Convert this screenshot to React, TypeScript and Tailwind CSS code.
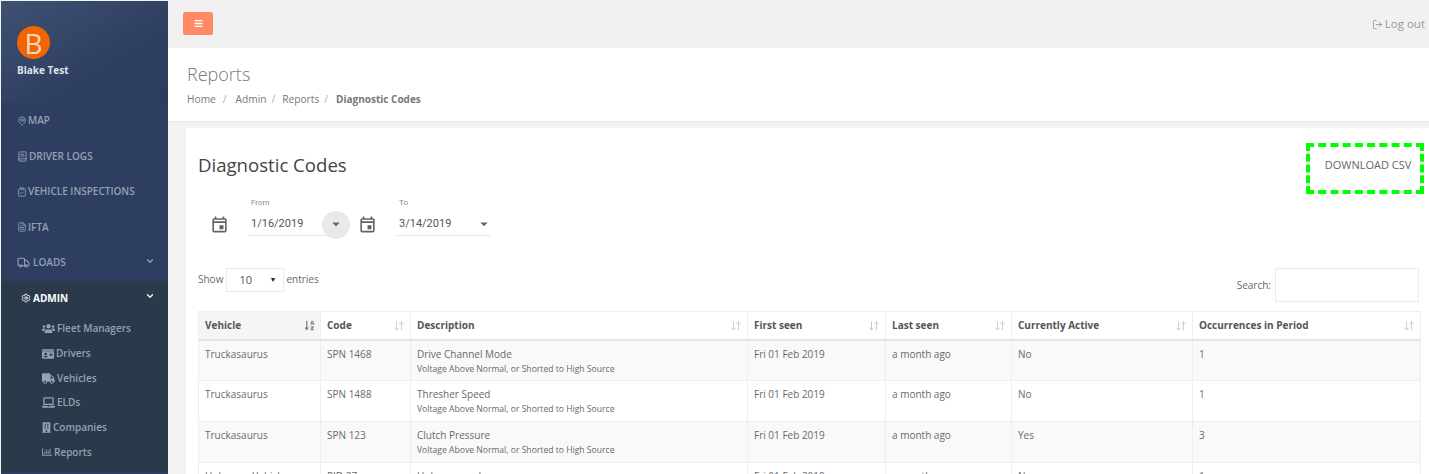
import { BookText, ChevronDown, ClipboardCheck, FileText, LogOut, MapPin, Truck, Settings } from 'lucide-react'
import { FaBars, FaBuilding, FaIdCard, FaLaptop, FaRegChartBar, FaSortAlphaDown, FaTruck, FaUsers } from 'react-icons/fa'
import { MdArrowDropDown, MdOutlineEvent } from 'react-icons/md'
import { LuArrowDownUp } from 'react-icons/lu'

const navItems = [
  { label: 'MAP', icon: <MapPin className="w-[10px] h-[12px]" /> },
  { label: 'DRIVER LOGS', icon: <BookText className="w-[11px] h-[11px]" /> },
  { label: 'VEHICLE INSPECTIONS', icon: <ClipboardCheck className="w-[10px] h-[12px]" /> },
  { label: 'IFTA', icon: <FileText className="w-[10px] h-[12px]" /> },
]

const subItems = [
  { label: 'Fleet Managers', icon: <FaUsers className="w-[13px] h-[13px]" /> },
  { label: 'Drivers', icon: <FaIdCard className="w-[12px] h-[12px]" /> },
  { label: 'Vehicles', icon: <FaTruck className="w-[13px] h-[13px]" /> },
  { label: 'ELDs', icon: <FaLaptop className="w-[13px] h-[13px]" /> },
  { label: 'Companies', icon: <FaBuilding className="w-[9px] h-[11px]" /> },
  { label: 'Reports', icon: <FaRegChartBar className="w-[10px] h-[10px]" /> },
]

const columns = ['Vehicle', 'Code', 'Description', 'First seen', 'Last seen', 'Currently Active', 'Occurrences in Period']

const rows = [
  { vehicle: 'Truckasaurus', code: 'SPN 1468', title: 'Drive Channel Mode', active: 'No', count: '1' },
  { vehicle: 'Truckasaurus', code: 'SPN 1488', title: 'Thresher Speed', active: 'No', count: '1' },
  { vehicle: 'Truckasaurus', code: 'SPN 123', title: 'Clutch Pressure', active: 'Yes', count: '3' },
  { vehicle: 'Unknown Vehicle', code: 'PID 27', title: 'Unknown code', active: 'No', count: '1' },
]

function DateField({ label, value, focused }: { label: string; value: string; focused?: boolean }) {
  return (
    <div className="flex items-center">
      <MdOutlineEvent className="w-[19px] h-[19px] text-[#5f6368] mr-[20px] mt-[15px]" />
      <div className="w-[93px]">
        <div className="text-[8px] leading-[10px] text-[#8a8a8a] ml-[2px] mb-[6px]">{label}</div>
        <div className="relative flex items-center h-[22px] border-b border-[#e4e4e4] text-[11px] text-[#555] pl-[2px]">
          {value}
          {focused && <span className="absolute left-[73px] top-[-3px] w-[28px] h-[28px] rounded-full bg-[#e9e9e9]" />}
          <MdArrowDropDown className="absolute left-[78px] top-[1px] w-[18px] h-[18px] text-[#666]" />
        </div>
      </div>
    </div>
  )
}

export default function App() {
  return (
    <div className="w-[1429px] h-[474px] overflow-hidden flex bg-[#f3f3f4] text-[#676a6c] font-['Open_Sans',sans-serif] pl-px pt-px">
      <aside className="w-[167px] shrink-0 h-full bg-[#2e3e60] text-[#95a1b5] font-semibold text-[10px]">
        <div className="h-[102px] pl-[16px] pt-[25px] bg-gradient-to-br from-[#3f5272] via-[#2f3f61] via-60% to-[#2c3c5e]">
          <div className="w-[33px] h-[33px] rounded-full bg-[#f26500] text-[#f5d7c0] flex items-center justify-center text-[28px] font-normal leading-none">B</div>
          <div className="mt-[4px] text-[10px] font-bold text-[#dfe4ec]">Blake Test</div>
        </div>
        <nav>
          {navItems.map((item) => (
            <div key={item.label} className="h-[35.5px] flex items-center gap-[1px] pl-[16px]">
              {item.icon}
              {item.label}
            </div>
          ))}
          <div className="h-[35.5px] flex items-center gap-[3px] pl-[16px] pr-[13px]">
            <Truck className="w-[13px] h-[13px]" />
            LOADS
            <ChevronDown className="w-[10px] h-[10px] ml-auto mb-[4px]" strokeWidth={3} />
          </div>
          <div className="h-[191px] bg-[#2b3a4b]">
            <div className="h-[35px] flex items-center gap-[2px] pl-[20px] pr-[13px] font-bold text-white">
              <Settings className="w-[10px] h-[10px]" />
              ADMIN
              <ChevronDown className="w-[10px] h-[10px] ml-auto mb-[4px]" strokeWidth={3} />
            </div>
            <div className="pt-px">
              {subItems.map((item) => (
                <div key={item.label} className="h-[24.7px] flex items-center gap-[2px] pl-[41px]">
                  {item.icon}
                  {item.label}
                </div>
              ))}
            </div>
          </div>
        </nav>
      </aside>

      <main className="flex-1 min-w-0">
        <header className="h-[47px] bg-[#f1f1f1] flex items-center justify-between pl-[15px] pr-[4px] pb-[2px] border-b border-[#eeeeee]">
          <button className="w-[30px] h-[23px] rounded-[2px] bg-[#ff8a65] text-white flex items-center justify-center">
            <FaBars className="w-[9px] h-[9px]" />
          </button>
          <div className="flex items-center gap-[2px] text-[11.5px] text-[#999] pt-[2px]">
            <LogOut className="w-[11px] h-[11px]" />
            Log out
          </div>
        </header>

        <section className="h-[74px] bg-white border-b border-[#e7eaec] pl-[19px] pt-[14px]">
          <h2 className="text-[18px] leading-[24px] font-light text-[#777]">Reports</h2>
          <div className="mt-[6px] flex text-[10.2px] leading-[14px] text-[#777]">
            <span>Home</span><span className="text-[#aaa] ml-[7px]">/</span>
            <span className="ml-[9px]">Admin</span><span className="text-[#aaa] ml-[5px]">/</span>
            <span className="ml-[7px]">Reports</span><span className="text-[#aaa] ml-[5px]">/</span>
            <b className="ml-[8px] font-bold text-[10px]">Diagnostic Codes</b>
          </div>
        </section>

        <section className="ml-[18px] mt-[6px] bg-white h-[400px] pl-[12px] pr-[8px]">
          <div className="flex justify-between pt-[15px]">
            <h1 className="text-[18.6px] leading-[44px] font-normal text-[#444]">Diagnostic Codes</h1>
            <button className="w-[118px] h-[51px] mr-[-3px] pb-[6px] pl-[6px] border-[4px] border-dashed border-[#00ff00] text-[11px] text-[#666]">DOWNLOAD CSV</button>
          </div>

          <div className="flex gap-[16px] pl-[12px] mt-[4px] font-['Roboto',sans-serif]">
            <DateField label="From" value="1/16/2019" focused />
            <DateField label="To" value="3/14/2019" />
          </div>

          <div className="flex justify-between mt-[32px] text-[10px]">
            <div className="flex items-start">
              <span className="mt-[4px] mr-[3px]">Show</span>
              <div className="w-[58px] h-[24px] border border-[#ececec] flex items-center justify-between pl-[12px] pr-[7px] text-[11px] text-[#555]">
                <span>10</span>
                <span className="text-[7px] text-[#222]">▼</span>
              </div>
              <span className="mt-[4px] ml-[2px]">entries</span>
            </div>
            <div className="flex items-center gap-[4px] mr-[2px]">
              <span>Search:</span>
              <div className="w-[144px] h-[34px] border border-[#ececec]" />
            </div>
          </div>

          <table className="w-[1222px] mt-[9px] table-fixed border-collapse text-[10px]">
            <colgroup>
              <col className="w-[122px]" />
              <col className="w-[90px]" />
              <col className="w-[337px]" />
              <col className="w-[138px]" />
              <col className="w-[126px]" />
              <col className="w-[181px]" />
              <col className="w-[228px]" />
            </colgroup>
            <thead>
              <tr className="h-[28px] border-b-2 border-[#e4e4e4]">
                {columns.map((col, i) => (
                  <th key={col} className={`border border-[#eeeeee] border-b-[#e4e4e4] pl-[6px] pr-[5px] pt-[1px] text-left font-bold text-[#555] ${i === 0 ? 'bg-[#f5f5f5]' : ''}`}>
                    <div className="flex items-center justify-between">
                      {col}
                      {i === 0 ? <FaSortAlphaDown className="w-[11px] h-[11px] text-[#888]" /> : <LuArrowDownUp className="w-[12px] h-[12px] text-[#ccc]" />}
                    </div>
                  </th>
                ))}
              </tr>
            </thead>
            <tbody>
              {rows.map((row, i) => (
                <tr key={i} className={`h-[41px] align-top ${i % 2 === 0 ? 'bg-[#f9f9f9]' : ''}`}>
                  <td className="border border-[#eeeeee] px-[6px] pt-[6px]">{row.vehicle}</td>
                  <td className="border border-[#eeeeee] px-[6px] pt-[6px]">{row.code}</td>
                  <td className="border border-[#eeeeee] px-[6px] pt-[6px]">
                    {row.title}
                    <div className="text-[8.6px] leading-[12px] mt-[1px]">Voltage Above Normal, or Shorted to High Source</div>
                  </td>
                  <td className="border border-[#eeeeee] px-[6px] pt-[6px]">Fri 01 Feb 2019</td>
                  <td className="border border-[#eeeeee] px-[6px] pt-[6px]">a month ago</td>
                  <td className="border border-[#eeeeee] px-[6px] pt-[6px]">{row.active}</td>
                  <td className="border border-[#eeeeee] px-[6px] pt-[6px]">{row.count}</td>
                </tr>
              ))}
            </tbody>
          </table>
        </section>
      </main>
    </div>
  )
}
